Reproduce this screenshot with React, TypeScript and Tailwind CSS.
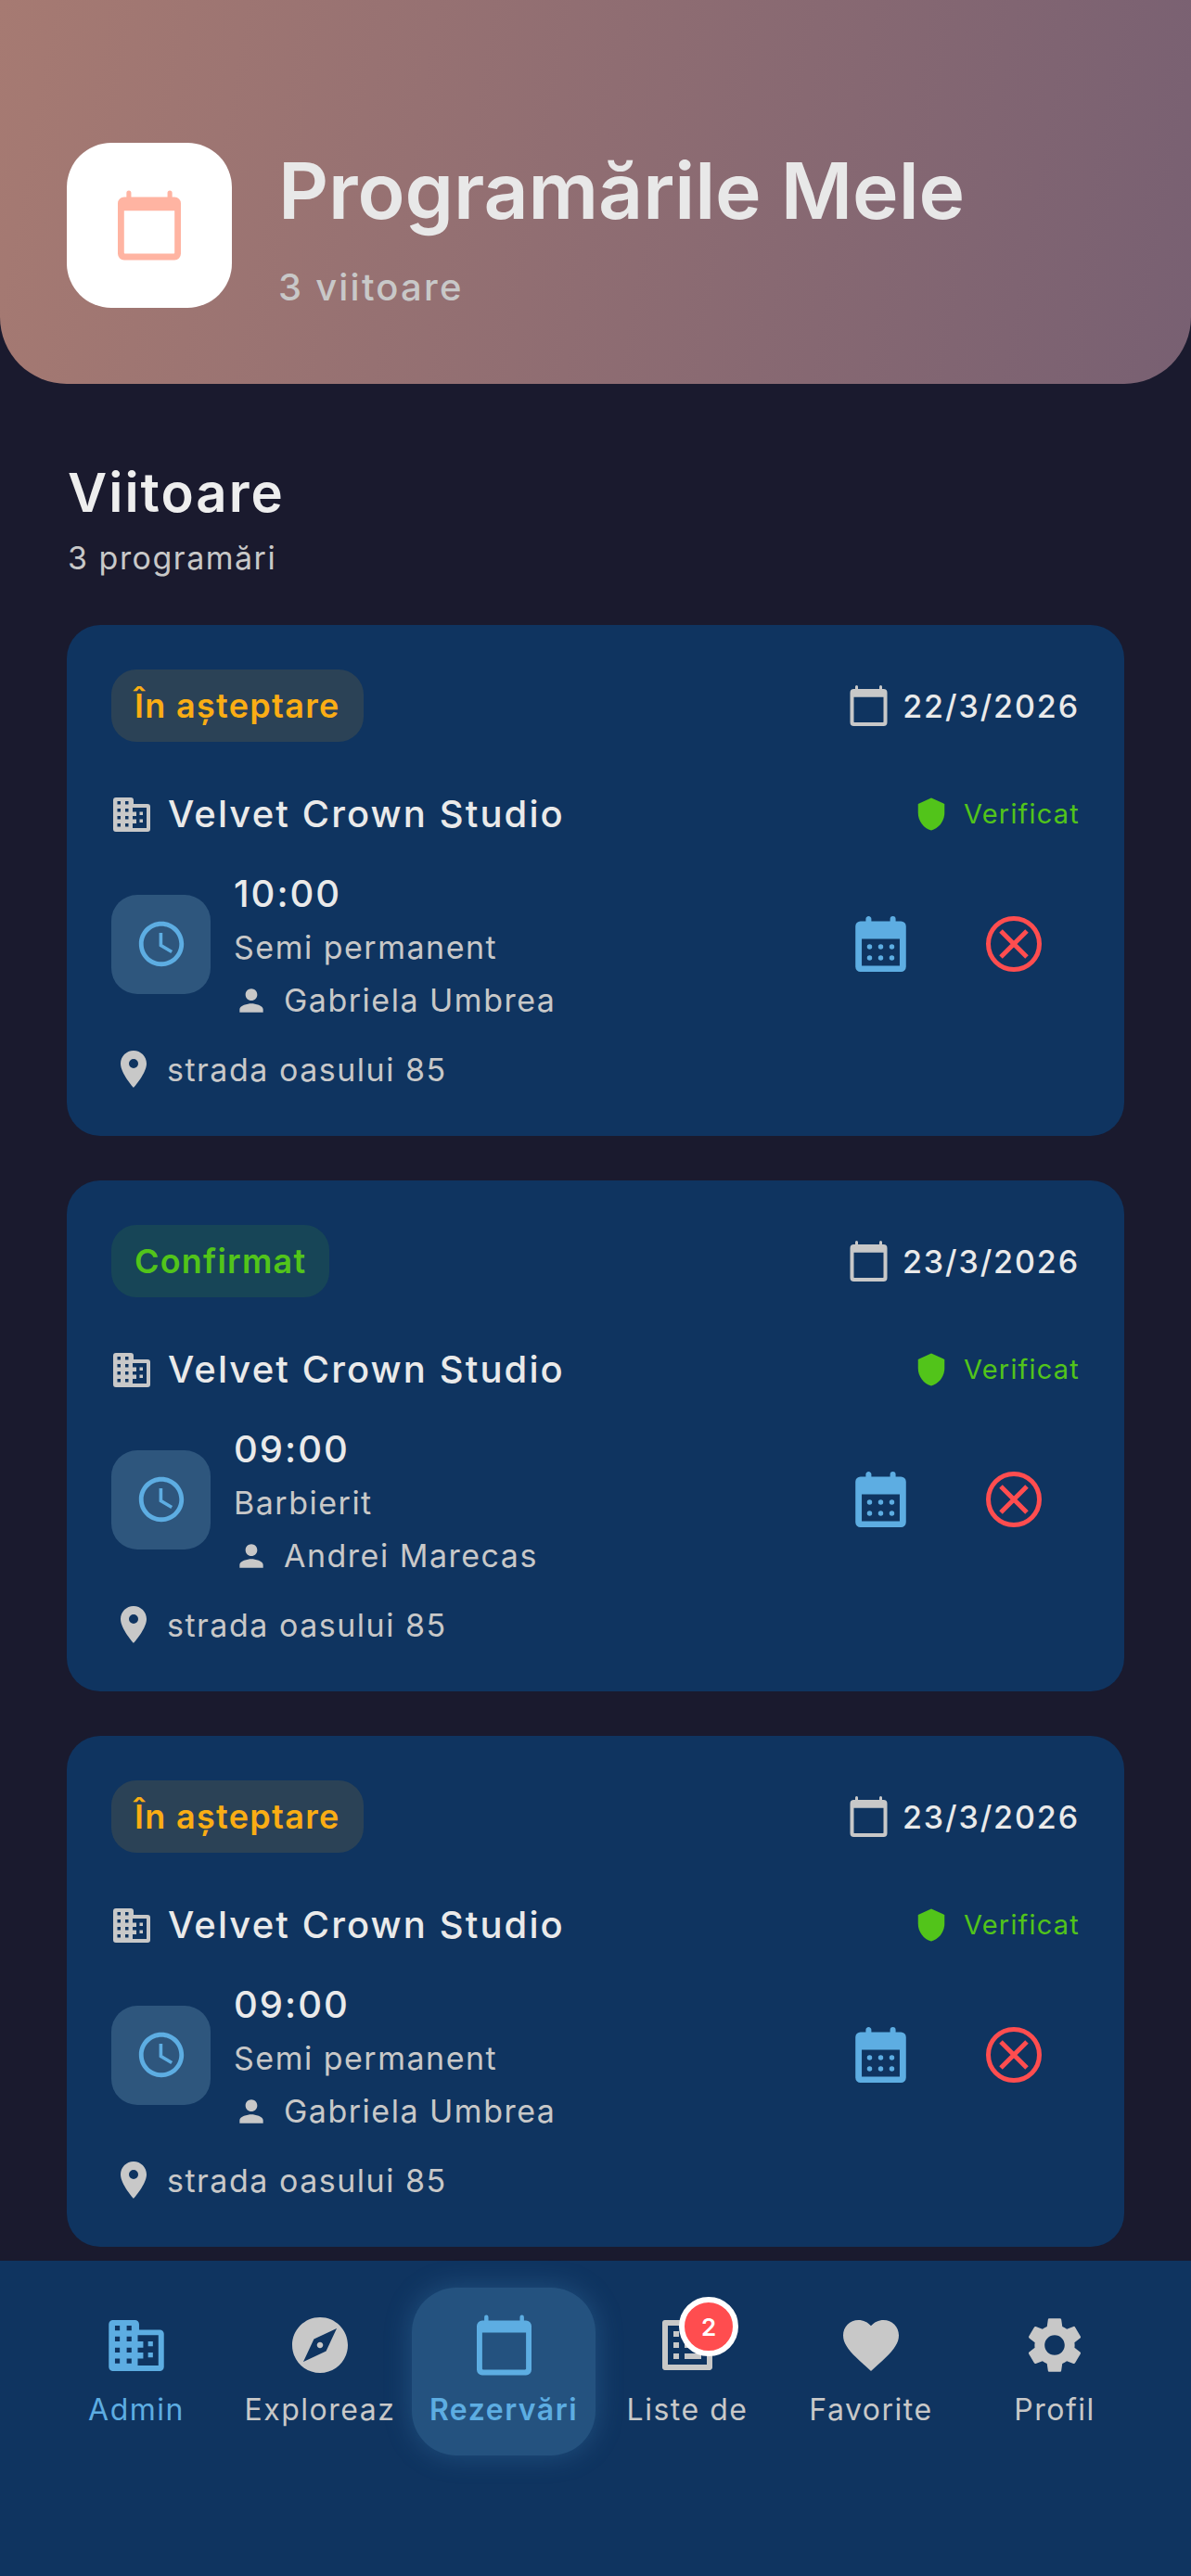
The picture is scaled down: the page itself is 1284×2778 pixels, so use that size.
import {
  MdAccessTime,
  MdExplore,
  MdFavorite,
  MdListAlt,
  MdLocationOn,
  MdPerson,
  MdSettings,
  MdShield,
} from "react-icons/md";

function BuildingIcon({ className }: { className?: string }) {
  return (
    <svg viewBox="0 0 40 37" fill="currentColor" className={className} aria-hidden="true">
      <path
        fillRule="evenodd"
        d="M3 0h16a3 3 0 0 1 3 3v4h15a3 3 0 0 1 3 3v24a3 3 0 0 1-3 3H3a3 3 0 0 1-3-3V3a3 3 0 0 1 3-3zM4.500 4v3.500H8V4zM13 4v3.500h3.500V4zM4.500 12v3.500H8V12zM13 12v3.500h3.500V12zM4.500 20v3.500H8V20zM13 20v3.500h3.500V20zM4.500 28v3.500H8V28zM13 28v3.500h3.500V28zM21 11v4.500h4V20h-4v3.500h4V28h-4v5h15V11zM28.500 15.500H32V19h-3.500zM28.500 23.500H32V27h-3.500z"
      />
    </svg>
  );
}

function CalendarIcon({ className }: { className?: string }) {
  return (
    <svg viewBox="2 1 20 22" fill="currentColor" className={className} aria-hidden="true">
      <path
        fillRule="evenodd"
        d="M5.5 1a.75.75 0 0 1 .75.75V3h11.5V1.750a.75.75 0 0 1 1.5 0V3H20a2 2 0 0 1 2 2v16a2 2 0 0 1-2 2H4a2 2 0 0 1-2-2V5a2 2 0 0 1 2-2h.75V1.750A.75.75 0 0 1 5.500 1zM4 7.400v13.200c0 .3.1.4.4.4h15.200c.3 0 .4-.1.4-.4V7.400z"
      />
    </svg>
  );
}

function CalendarDotsIcon({ className }: { className?: string }) {
  return (
    <svg viewBox="2 1 20 22" fill="currentColor" className={className} aria-hidden="true">
      <path
        fillRule="evenodd"
        d="M7.200 1c.6 0 1.100.5 1.100 1.100V3h7.400v-.9a1.100 1.100 0 0 1 2.200 0V3H20a2 2 0 0 1 2 2v16a2 2 0 0 1-2 2H4a2 2 0 0 1-2-2V5a2 2 0 0 1 2-2h2.100v-.9C6.100 1.500 6.600 1 7.200 1zM4.500 10v10.600h15V10z"
      />
      <circle cx="7.600" cy="13.100" r="1" />
      <circle cx="12" cy="13.100" r="1" />
      <circle cx="16.400" cy="13.100" r="1" />
      <circle cx="7.600" cy="17.500" r="1" />
      <circle cx="12" cy="17.500" r="1" />
      <circle cx="16.400" cy="17.500" r="1" />
    </svg>
  );
}

function CancelIcon({ className }: { className?: string }) {
  return (
    <svg viewBox="0 0 60 60" fill="none" stroke="currentColor" strokeWidth={5} className={className} aria-hidden="true">
      <circle cx="30" cy="30" r="27.500" />
      <path d="M16 16l28 28M44 16L16 44" />
    </svg>
  );
}

interface Booking {
  status: string;
  confirmed: boolean;
  date: string;
  time: string;
  service: string;
  staff: string;
}

const bookings: Booking[] = [
  { status: "În așteptare", confirmed: false, date: "22/3/2026", time: "10:00", service: "Semi permanent", staff: "Gabriela Umbrea" },
  { status: "Confirmat", confirmed: true, date: "23/3/2026", time: "09:00", service: "Barbierit", staff: "Andrei Marecas" },
  { status: "În așteptare", confirmed: false, date: "23/3/2026", time: "09:00", service: "Semi permanent", staff: "Gabriela Umbrea" },
];

function BookingCard({ booking }: { booking: Booking }) {
  return (
    <div className="h-[551px] rounded-[36px] bg-[#0f3460] px-[48px] pt-[48px]">
      <div className="flex h-[78px] items-center justify-between">
        <span
          className={
            booking.confirmed
              ? "flex h-[78px] items-center rounded-[27px] bg-[#52c41a]/12 px-[25px] text-[36px] font-semibold tracking-[1.2px] text-[#52c41a]"
              : "flex h-[78px] items-center rounded-[27px] bg-[#faad14]/12 px-[25px] text-[36px] font-semibold tracking-[1.3px] text-[#faad14]"
          }
        >
          {booking.status}
        </span>
        <div className="flex items-center gap-[16px]">
          <CalendarIcon className="h-[44px] w-[41px] text-[#c8c8c8]" />
          <span className="text-[34px] font-medium tracking-[1.9px] text-[#eaeaea]">{booking.date}</span>
        </div>
      </div>

      <div className="mt-[54px] flex h-[48px] items-center justify-between">
        <div className="flex items-center gap-[19px] pl-[2px]">
          <BuildingIcon className="h-[37px] w-[40px] text-[#c8c8c8]" />
          <span className="text-[40px] font-medium tracking-[2.1px] text-[#eaeaea]">Velvet Crown Studio</span>
        </div>
        <div className="flex items-center gap-[16px]">
          <MdShield className="size-[38px] text-[#52c41a]" />
          <span className="text-[29px] tracking-[1.2px] text-[#52c41a]">Verificat</span>
        </div>
      </div>

      <div className="mt-[27px] flex items-center">
        <div className="flex size-[107px] shrink-0 items-center justify-center rounded-[28px] bg-[#2e567d]">
          <MdAccessTime className="size-[58px] text-[#5dade2]" />
        </div>
        <div className="ml-[25px] flex-1 pt-[6px]">
          <div className="text-[40px] leading-[58px] font-medium tracking-[2px] text-[#eaeaea]">{booking.time}</div>
          <div className="text-[34px] leading-[57px] tracking-[1.5px] text-[#c8c8c8]">{booking.service}</div>
          <div className="flex h-[57px] items-center gap-[16px]">
            <MdPerson className="size-[38px] text-[#c8c8c8]" />
            <span className="text-[34px] tracking-[1.5px] text-[#c8c8c8]">{booking.staff}</span>
          </div>
        </div>
        <div className="flex items-center gap-[86px] pr-[41px]">
          <CalendarDotsIcon className="h-[60px] w-[55px] text-[#5dade2]" />
          <CancelIcon className="size-[60px] text-[#ff4d4f]" />
        </div>
      </div>

      <div className="mt-[22px] flex h-[48px] items-center gap-[12px]">
        <MdLocationOn className="size-[48px] text-[#c8c8c8]" />
        <span className="text-[34px] tracking-[1.5px] text-[#c8c8c8]">strada oasului 85</span>
      </div>
    </div>
  );
}

function NavItem({
  label,
  icon,
  active,
  highlight,
}: {
  label: string;
  icon: React.ReactNode;
  active?: boolean;
  highlight?: boolean;
}) {
  return (
    <div
      className={
        active
          ? "flex h-[181px] w-[198px] flex-col items-center rounded-[48px] bg-[#24527f] pt-[27px] shadow-[0_0_30px_rgba(93,173,226,0.25)]"
          : "flex h-[181px] w-[198px] flex-col items-center pt-[27px]"
      }
    >
      <div className="relative flex h-[70px] items-center justify-center">{icon}</div>
      <span
        className={
          active
            ? "mt-[15px] text-[32px] leading-[40px] font-semibold tracking-[1.5px] text-[#5dade2]"
            : highlight
              ? "mt-[15px] text-[32px] leading-[40px] tracking-[1.5px] text-[#5dade2]"
              : "mt-[15px] text-[32px] leading-[40px] tracking-[1.5px] text-[#c8c8c8]"
        }
      >
        {label}
      </span>
    </div>
  );
}

export default function App() {
  return (
    <div className="flex h-[2778px] w-[1284px] flex-col overflow-hidden bg-[#1a1a2e] font-['Inter',sans-serif]">
      <header className="flex h-[414px] shrink-0 items-start rounded-b-[72px] bg-[linear-gradient(100deg,#a67a72_0%,#786072_100%)] px-[72px] pt-[154px]">
        <div className="flex size-[178px] items-center justify-center rounded-[48px] bg-white">
          <CalendarIcon className="h-[76px] w-[68px] text-[#ffb4a2]" />
        </div>
        <div className="ml-[50px] pt-[2px]">
          <h1 className="text-[84px] leading-[100px] font-semibold tracking-[-0.1px] text-[#e8e8e8]">Programările Mele</h1>
          <p className="mt-[26px] text-[40px] leading-[56px] font-medium tracking-[2.2px] text-[#c8c8c8]">3 viitoare</p>
        </div>
      </header>

      <main className="flex-1 overflow-hidden px-[72px] pt-[84px]">
        <h2 className="pl-[1px] text-[58px] leading-[66px] font-semibold tracking-[2px] text-[#eeeeee]">Viitoare</h2>
        <p className="mt-[15px] pl-[1px] text-[34px] leading-[46px] tracking-[1.5px] text-[#c8c8c8]">3 programări</p>
        <div className="mt-[49px] flex flex-col gap-[48px]">
          {bookings.map((booking, i) => (
            <BookingCard key={i} booking={booking} />
          ))}
        </div>
      </main>

      <nav className="flex h-[340px] shrink-0 items-start bg-[#0f3460] px-[48px] pt-[29px]">
        <NavItem label="Admin" highlight icon={<BuildingIcon className="h-[55px] w-[60px] text-[#5dade2]" />} />
        <NavItem label="Exploreaz" icon={<MdExplore className="size-[72px] text-[#c8c8c8]" />} />
        <NavItem label="Rezervări" active icon={<CalendarIcon className="h-[66px] w-[59px] text-[#5dade2]" />} />
        <NavItem
          label="Liste de"
          icon={
            <>
              <MdListAlt className="size-[72px] text-[#c8c8c8]" />
              <span className="absolute -top-[17px] -right-[19px] flex size-[64px] items-center justify-center rounded-full border-[6px] border-white bg-[#ff4d4f] text-[26px] font-semibold text-white">
                2
              </span>
            </>
          }
        />
        <NavItem label="Favorite" icon={<MdFavorite className="size-[72px] text-[#c8c8c8]" />} />
        <NavItem label="Profil" icon={<MdSettings className="size-[72px] text-[#c8c8c8]" />} />
      </nav>
    </div>
  );
}
